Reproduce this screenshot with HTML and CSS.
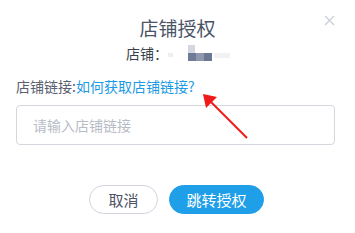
FILE: index.html
```html
<!DOCTYPE html>
<html>
<head>
<meta charset="utf-8">
<link rel="stylesheet" href="styles.css">
</head>
<body>
<div class="dialog">
  <svg class="close" width="11" height="11" viewBox="0 0 11 11"><path d="M1 1L10 10M10 1L1 10" stroke="#c8ccd6" stroke-width="1.2" fill="none"/></svg>
  <div class="title">店铺授权</div>
  <div class="shop">
    <span class="shop-label">店铺：</span>
    <span class="mask">
      <i class="m m1"></i><i class="m m2"></i><i class="m m3"></i><i class="m m4"></i><i class="m m5"></i><i class="m m6"></i>
    </span>
  </div>
  <div class="link-row"><span class="label">店铺链接:</span><span class="link">如何获取店铺链接?</span></div>
  <div class="input">请输入店铺链接</div>
  <div class="actions">
    <div class="btn cancel">取消</div>
    <div class="btn primary">跳转授权</div>
  </div>
  <svg class="arrow" width="60" height="60" viewBox="0 0 60 60">
    <path d="M47 47L11 11" stroke="#f01a1a" stroke-width="2" fill="none"/>
    <path d="M3 3L17 6L6 17Z" fill="#f01a1a"/>
  </svg>
</div>
</body>
</html>
```
FILE: styles.css
```css
html, body { margin: 0; padding: 0; background: #fff; }
body { width: 355px; height: 233px; overflow: hidden; font-family: "Noto Sans CJK SC", "Noto Sans", sans-serif; }
.dialog { position: relative; width: 355px; height: 233px; box-sizing: border-box; padding: 14px 20px 0 16px; }
.close { position: absolute; left: 324px; top: 15px; }
.title { text-align: center; font-size: 19px; color: #4b5366; line-height: 28px; padding-left: 4px; }
.shop { display: flex; align-items: center; height: 22px; padding-left: 110px; font-size: 14px; color: #3a3f4c; }
.shop-label { margin-right: 0; }
.mask { position: relative; width: 70px; height: 18px; }
.m { position: absolute; display: block; }
.m1 { left: 0; top: 9px; width: 5px; height: 4px; background: #eceef2; }
.m2 { left: 20px; top: 1px; width: 7px; height: 8px; background: #d3d7e0; }
.m3 { left: 20px; top: 9px; width: 8px; height: 8px; background: #6f7a96; }
.m4 { left: 28px; top: 9px; width: 8px; height: 8px; background: #8e97ae; }
.m5 { left: 36px; top: 9px; width: 8px; height: 8px; background: #6c7793; }
.m6 { left: 46px; top: 9px; width: 16px; height: 5px; background: #f1f2f5; }
.link-row { margin-top: 12px; font-size: 14px; line-height: 20px; }
.label { color: #5a6070; }
.link { color: #1c9be3; }
.input { margin-top: 9px; height: 40px; box-sizing: border-box; border: 1px solid #d4d7de; border-radius: 4px; padding-left: 16px; font-size: 14px; line-height: 38px; color: #b8bcc6; }
.actions { display: flex; justify-content: center; gap: 11px; margin-top: 40px; padding-left: 2px; }
.btn { height: 29px; box-sizing: border-box; border-radius: 15px; font-size: 15px; line-height: 27px; text-align: center; }
.cancel { width: 69px; border: 1px solid #d0d4de; color: #4b5366; background: #fff; }
.primary { width: 95px; border: 1px solid #1f9fe8; background: #1f9fe8; color: #fff; }
.arrow { position: absolute; left: 200px; top: 91px; }
```
